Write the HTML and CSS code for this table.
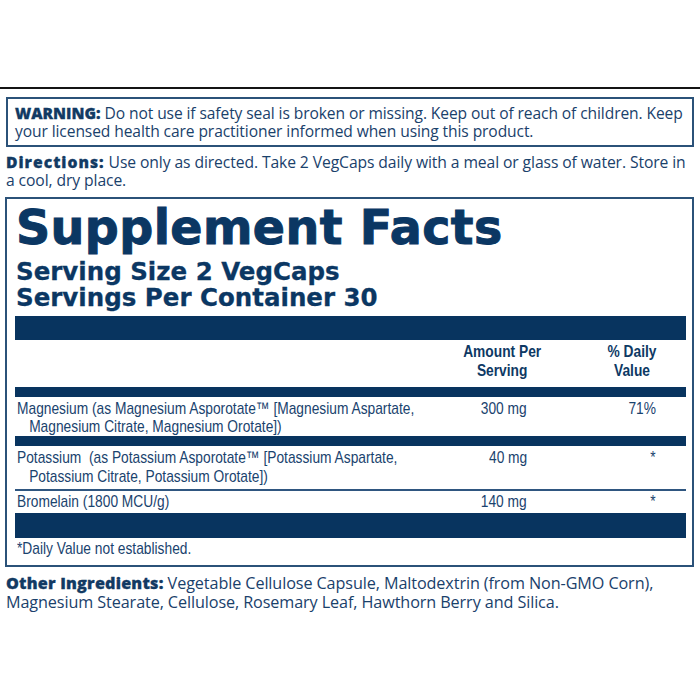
FILE: index.html
```html
<!DOCTYPE html>
<html lang="en">
<head>
<meta charset="utf-8">
<title>Supplement Facts</title>
<link rel="stylesheet" href="styles.css">
</head>
<body>
<div class="page">
  <div class="topline"></div>
  <div class="warning"><b>WARNING:</b> Do not use if safety seal is broken or missing. Keep out of reach of children. Keep<br>your licensed health care practitioner informed when using this product.</div>
  <p class="directions"><b>Directions:</b> Use only as directed. Take 2 VegCaps daily with a meal or glass of water. Store in<br>a cool, dry place.</p>
  <section class="facts">
    <h1 class="facts-title">Supplement Facts</h1>
    <p class="serving">Serving Size 2 VegCaps<br>Servings Per Container 30</p>
    <div class="bar bar-lg"></div>
    <div class="row head">
      <div class="name"></div>
      <div class="amt"><span class="t">Amount Per<br>Serving</span></div>
      <div class="dv"><span class="t">% Daily<br>Value</span></div>
    </div>
    <div class="bar bar-md"></div>
    <div class="row r-mg">
      <div class="name"><span class="t">Magnesium (as Magnesium Asporotate™ [Magnesium Aspartate,<br>Magnesium Citrate, Magnesium Orotate])</span></div>
      <div class="amt"><span class="t">300 mg</span></div>
      <div class="dv"><span class="t">71%</span></div>
    </div>
    <div class="bar bar-md"></div>
    <div class="row r-k">
      <div class="name"><span class="t">Potassium&nbsp; (as Potassium Asporotate™ [Potassium Aspartate,<br>Potassium Citrate, Potassium Orotate])</span></div>
      <div class="amt"><span class="t">40 mg</span></div>
      <div class="dv"><span class="t">*</span></div>
    </div>
    <div class="rule"></div>
    <div class="row r-br">
      <div class="name"><span class="t">Bromelain (1800 MCU/g)</span></div>
      <div class="amt"><span class="t">140 mg</span></div>
      <div class="dv"><span class="t">*</span></div>
    </div>
    <div class="bar bar-lg2"></div>
    <p class="foot"><span class="t">*Daily Value not established.</span></p>
  </section>
  <p class="other"><b>Other Ingredients:</b> Vegetable Cellulose Capsule, Maltodextrin (from Non-GMO Corn),<br>Magnesium Stearate, Cellulose, Rosemary Leaf, Hawthorn Berry and Silica.</p>
</div>
</body>
</html>
```

FILE: styles.css
```css
html, body {
  margin: 0;
  padding: 0;
  background: #ffffff;
}
.page {
  width: 700px;
  height: 700px;
  padding-top: 87px;
  box-sizing: border-box;
  color: #1a416b;
  font-family: "Open Sans", "Noto Sans", sans-serif;
}
.topline {
  height: 2px;
  background: #141414;
}
.warning {
  margin: 8px 6px 0 6px;
  border: 2px solid #2b5279;
  padding: 5px 4px 5px 7px;
  font-size: 15.6px;
  line-height: 18px;
  letter-spacing: -0.1px;
  white-space: nowrap;
}
.warning b, .directions b, .other b {
  font-weight: 800;
  color: #123a63;
  -webkit-text-stroke: 0.3px #123a63;
}
.warning b { letter-spacing: 0; }
.directions b { letter-spacing: 1px; }
.other b { letter-spacing: 0.2px; }
.directions, .other {
  margin: 6px 6px 0 6px;
  font-size: 15.7px;
  line-height: 18px;
  letter-spacing: -0.1px;
  white-space: nowrap;
}
.other {
  margin-top: 7px;
  font-size: 16.2px;
  line-height: 19px;
}
.facts {
  margin: 8px 6px 0 5px;
  border: 2px solid #2b5279;
  padding: 7px 6px 7px 8px;
  color: #1a436e;
}
.facts-title {
  margin: 0 0 0 1px;
  font-family: "DejaVu Sans", sans-serif;
  font-weight: 700;
  font-size: 47.5px;
  line-height: 44px;
  color: #0b3763;
  letter-spacing: 0.4px;
  -webkit-text-stroke: 1px #0b3763;
}
.serving {
  margin: 9px 0 0 1px;
  font-family: "DejaVu Sans", sans-serif;
  font-weight: 700;
  font-size: 24.5px;
  line-height: 26px;
  color: #0b3763;
  -webkit-text-stroke: 0.3px #0b3763;
}
.bar {
  background: #08345f;
}
.bar-lg { height: 24px; margin-top: 5px; }
.bar-md { height: 10px; }
.bar-lg2 { height: 25px; }
.rule {
  height: 2px;
  background: #2f5680;
}
.row {
  display: grid;
  grid-template-columns: minmax(0, 1fr) 80px 114px 30px;
  font-family: "Liberation Sans", Arial, sans-serif;
  font-size: 17px;
  line-height: 18px;
  white-space: nowrap;
}
.row::after {
  content: "";
}
.t {
  display: inline-block;
  transform: scaleX(0.81);
}
.name .t {
  transform-origin: left center;
  padding-left: 15px;
  text-indent: -15px;
}
.name {
  padding-left: 2px;
}
.amt {
  text-align: right;
  padding-right: 15px;
}
.amt .t, .dv .t {
  transform-origin: right center;
}
.dv {
  text-align: right;
}
.head {
  padding: 2px 0 7px;
  line-height: 19px;
  font-weight: 700;
  color: #0e3964;
}
.head .amt {
  display: flex;
  justify-content: center;
  padding-right: 0;
  text-align: center;
}
.head .amt .t {
  flex: none;
  transform-origin: center center;
}
.head .dv .t {
  text-align: center;
}
.r-mg { padding: 3px 0 0; }
.r-k { padding: 2px 0 3px; line-height: 19px; }
.r-br { padding: 1px 0 2px; line-height: 19px; }
.foot {
  margin: 0;
  padding: 1px 0 0 2px;
  font-family: "Liberation Sans", Arial, sans-serif;
  font-size: 17px;
  line-height: 19px;
  white-space: nowrap;
}
.foot .t {
  transform-origin: left center;
}
```
